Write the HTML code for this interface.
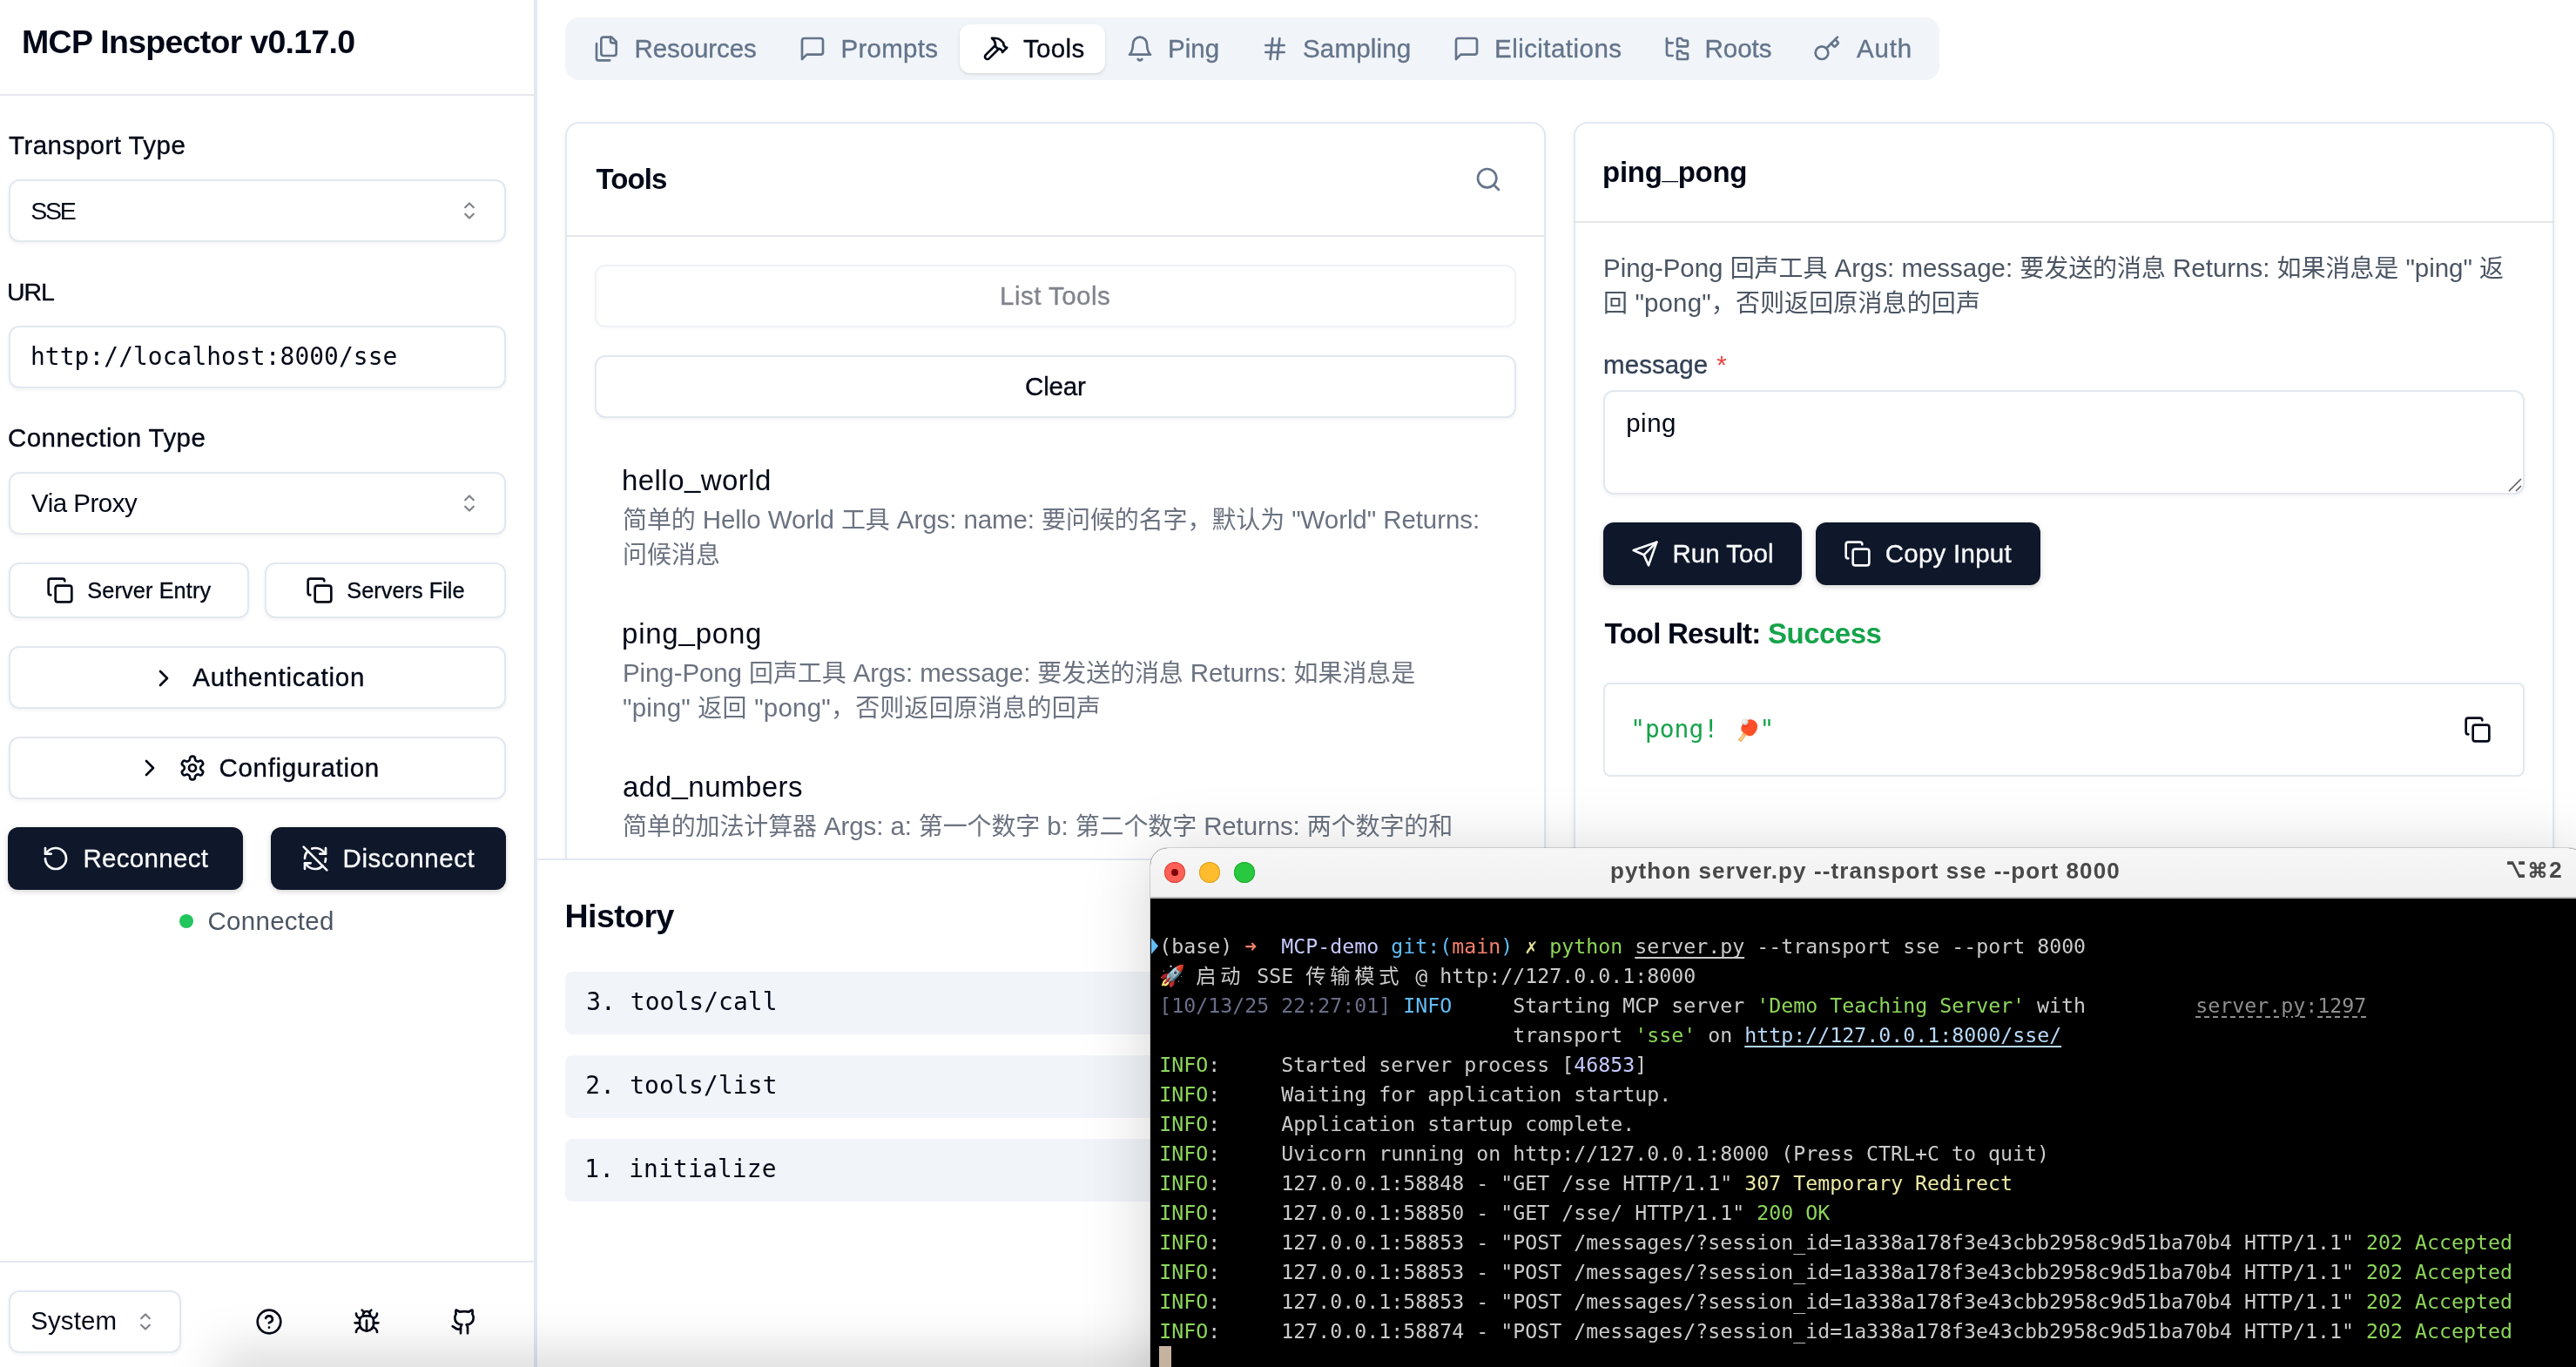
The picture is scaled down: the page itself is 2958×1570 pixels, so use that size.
<!DOCTYPE html>
<html lang="en"><head><meta charset="utf-8"><title>MCP Inspector</title><style>
html,body{margin:0;padding:0}
body{width:2958px;height:1570px;overflow:hidden;background:#fff;position:relative;font-family:'Liberation Sans','Noto Sans CJK SC',sans-serif;color:#020817}
body div,body svg.i,.abs,.t{position:absolute;box-sizing:border-box}
#app{left:0;top:0;width:2958px;height:1570px;overflow:hidden;will-change:transform}
.t{white-space:nowrap;line-height:0;height:0}
.t span{line-height:0}
.s{font-family:'Liberation Sans','Noto Sans CJK SC',sans-serif}
.m{font-family:'DejaVu Sans Mono','Liberation Mono','Noto Sans CJK SC',monospace}
.inp{border:2px solid #e2e8f0;border-radius:12px;background:#fff;box-shadow:0 2px 4px rgba(0,0,0,.05)}
.btn-o{border:2px solid #e2e8f0;border-radius:12px;background:#fff;box-shadow:0 2px 4px rgba(0,0,0,.05)}
.btn-d{background:#0f172a;border-radius:12px;box-shadow:0 2px 6px rgba(0,0,0,.18)}
.card{border:2px solid #e2e8f0;border-radius:16px;background:#fff;box-shadow:0 2px 6px rgba(0,0,0,.06)}
.term{background:#000;border-radius:20px 20px 0 0;overflow:hidden;box-shadow:0 8px 80px rgba(0,0,0,.18),0 0 0 1px rgba(0,0,0,.14)}
</style></head><body>
<div id="app">
<aside class="abs" style="left:0;top:0;width:613px;height:1570px;background:#fff"><span class="t s" style="left:25.00px;top:48.01px;font-size:37.50px;font-weight:700;letter-spacing:-0.711px;">MCP Inspector v0.17.0</span><div style="left:0px;top:108px;width:613px;height:2px;background:#e5e7eb"></div><span class="t s" style="left:10.00px;top:166.78px;font-size:29.50px;letter-spacing:0.470px;-webkit-text-stroke:0.35px #020817;">Transport Type</span><div class="inp" style="left:9.5px;top:206px;width:571px;height:72px;"></div><span class="t s" style="left:35.25px;top:242.12px;font-size:28.50px;letter-spacing:-2.259px;">SSE</span><svg class="i" style="left:523px;top:226px;opacity:0.5" width="32" height="32" viewBox="0 0 15 15" fill="none" stroke="#020817" stroke-width="1" stroke-linecap="round" stroke-linejoin="round"><path d="M5.25 5.75 7.5 3.5l2.25 2.250"/><path d="M5.25 9.250 7.5 11.500l2.250-2.250"/></svg><span class="t s" style="left:8.00px;top:335.12px;font-size:28.50px;letter-spacing:-1.082px;-webkit-text-stroke:0.35px #020817;">URL</span><div class="inp" style="left:9.5px;top:374px;width:571px;height:72px;"></div><span class="t m" style="left:35.00px;top:410.33px;font-size:27.90px;letter-spacing:0.063px;">http://localhost:8000/sse</span><span class="t s" style="left:9.00px;top:502.78px;font-size:29.50px;letter-spacing:0.429px;-webkit-text-stroke:0.35px #020817;">Connection Type</span><div class="inp" style="left:9.5px;top:542px;width:571px;height:72px;"></div><span class="t s" style="left:36.00px;top:577.78px;font-size:29.50px;letter-spacing:-0.495px;">Via Proxy</span><svg class="i" style="left:523px;top:562px;opacity:0.5" width="32" height="32" viewBox="0 0 15 15" fill="none" stroke="#020817" stroke-width="1" stroke-linecap="round" stroke-linejoin="round"><path d="M5.25 5.75 7.5 3.5l2.25 2.250"/><path d="M5.25 9.250 7.5 11.500l2.250-2.250"/></svg><div class="btn-o" style="left:9.5px;top:646px;width:276.5px;height:64px;"></div><svg class="i" style="left:53px;top:661.5px;" width="32" height="32" viewBox="0 0 24 24" fill="none" stroke="#020817" stroke-width="2" stroke-linecap="round" stroke-linejoin="round"><rect width="14" height="14" x="8" y="8" rx="2" ry="2"/><path d="M4 16c-1.1 0-2-.9-2-2V4c0-1.1.9-2 2-2h10c1.1 0 2 .9 2 2"/></svg><span class="t s" style="left:100.25px;top:677.73px;font-size:25.30px;letter-spacing:0.120px;-webkit-text-stroke:0.30px #020817;">Server Entry</span><div class="btn-o" style="left:303.5px;top:646px;width:277px;height:64px;"></div><svg class="i" style="left:350.7px;top:661.5px;" width="32" height="32" viewBox="0 0 24 24" fill="none" stroke="#020817" stroke-width="2" stroke-linecap="round" stroke-linejoin="round"><rect width="14" height="14" x="8" y="8" rx="2" ry="2"/><path d="M4 16c-1.1 0-2-.9-2-2V4c0-1.1.9-2 2-2h10c1.1 0 2 .9 2 2"/></svg><span class="t s" style="left:398.25px;top:677.73px;font-size:25.30px;letter-spacing:0.034px;-webkit-text-stroke:0.30px #020817;">Servers File</span><div class="btn-o" style="left:9.5px;top:742px;width:571px;height:72px;"></div><svg class="i" style="left:172px;top:762.5px;" width="32" height="32" viewBox="0 0 24 24" fill="none" stroke="#020817" stroke-width="2" stroke-linecap="round" stroke-linejoin="round"><path d="m9 18 6-6-6-6"/></svg><span class="t s" style="left:221.25px;top:777.78px;font-size:29.50px;letter-spacing:0.784px;-webkit-text-stroke:0.35px #020817;">Authentication</span><div class="btn-o" style="left:9.5px;top:846px;width:571px;height:72px;"></div><svg class="i" style="left:155.6px;top:866px;" width="32" height="32" viewBox="0 0 24 24" fill="none" stroke="#020817" stroke-width="2" stroke-linecap="round" stroke-linejoin="round"><path d="m9 18 6-6-6-6"/></svg><svg class="i" style="left:205px;top:866px;" width="32" height="32" viewBox="0 0 24 24" fill="none" stroke="#020817" stroke-width="2" stroke-linecap="round" stroke-linejoin="round"><path d="M12.22 2h-.44a2 2 0 0 0-2 2v.18a2 2 0 0 1-1 1.73l-.43.25a2 2 0 0 1-2 0l-.15-.08a2 2 0 0 0-2.73.73l-.22.38a2 2 0 0 0 .73 2.73l.15.1a2 2 0 0 1 1 1.72v.51a2 2 0 0 1-1 1.74l-.15.09a2 2 0 0 0-.73 2.73l.22.38a2 2 0 0 0 2.73.73l.15-.08a2 2 0 0 1 2 0l.43.25a2 2 0 0 1 1 1.73V20a2 2 0 0 0 2 2h.44a2 2 0 0 0 2-2v-.18a2 2 0 0 1 1-1.73l.43-.25a2 2 0 0 1 2 0l.15.08a2 2 0 0 0 2.73-.73l.22-.39a2 2 0 0 0-.73-2.73l-.15-.08a2 2 0 0 1-1-1.74v-.5a2 2 0 0 1 1-1.74l.15-.09a2 2 0 0 0 .73-2.73l-.22-.38a2 2 0 0 0-2.73-.73l-.15.08a2 2 0 0 1-2 0l-.43-.25a2 2 0 0 1-1-1.73V4a2 2 0 0 0-2-2z"/><circle cx="12" cy="12" r="3"/></svg><span class="t s" style="left:251.50px;top:881.78px;font-size:29.50px;letter-spacing:0.682px;-webkit-text-stroke:0.35px #020817;">Configuration</span><div class="btn-d" style="left:9px;top:950px;width:270px;height:72px;"></div><svg class="i" style="left:47.5px;top:970px;" width="32" height="32" viewBox="0 0 24 24" fill="none" stroke="#f8fafc" stroke-width="2" stroke-linecap="round" stroke-linejoin="round"><path d="M3 12a9 9 0 1 0 9-9 9.75 9.75 0 0 0-6.74 2.74L3 8"/><path d="M3 3v5h5"/></svg><span class="t s" style="left:95.50px;top:985.78px;font-size:29.50px;color:#f8fafc;letter-spacing:0.302px;-webkit-text-stroke:0.30px #f8fafc;">Reconnect</span><div class="btn-d" style="left:311px;top:950px;width:270px;height:72px;"></div><svg class="i" style="left:346px;top:970px;" width="32" height="32" viewBox="0 0 24 24" fill="none" stroke="#f8fafc" stroke-width="2" stroke-linecap="round" stroke-linejoin="round"><path d="M21 8L18.74 5.74A9.75 9.75 0 0 0 12 3C11 3 10.03 3.16 9.13 3.47"/><path d="M8 16H3v5"/><path d="M3 12C3 9.51 4 7.26 5.64 5.64"/><path d="m3 16 2.26 2.26A9.75 9.75 0 0 0 12 21c2.49 0 4.74-1 6.36-2.64"/><path d="M21 12c0 1-.16 1.97-.47 2.87"/><path d="M21 3v5h-5"/><path d="M22 22 2 2"/></svg><span class="t s" style="left:393.50px;top:985.78px;font-size:29.50px;color:#f8fafc;letter-spacing:0.585px;-webkit-text-stroke:0.30px #f8fafc;">Disconnect</span><div style="left:206px;top:1050px;width:16px;height:16px;background:#22c55e;border-radius:50%"></div><span class="t s" style="left:238.50px;top:1057.78px;font-size:29.50px;color:#4b5563;letter-spacing:0.277px;">Connected</span><div style="left:0px;top:1448px;width:613px;height:2px;background:#e2e8f0"></div><div class="inp" style="left:9.5px;top:1482px;width:198.75px;height:72px;"></div><span class="t s" style="left:35.25px;top:1517.28px;font-size:29.50px;letter-spacing:0.094px;">System</span><svg class="i" style="left:151px;top:1502px;opacity:0.5" width="32" height="32" viewBox="0 0 15 15" fill="none" stroke="#020817" stroke-width="1" stroke-linecap="round" stroke-linejoin="round"><path d="M5.25 5.75 7.5 3.5l2.25 2.250"/><path d="M5.25 9.250 7.5 11.500l2.250-2.250"/></svg><svg class="i" style="left:293px;top:1502px;" width="32" height="32" viewBox="0 0 24 24" fill="none" stroke="#020817" stroke-width="2" stroke-linecap="round" stroke-linejoin="round"><circle cx="12" cy="12" r="10"/><path d="M9.09 9a3 3 0 0 1 5.83 1c0 2-3 3-3 3"/><path d="M12 17h.01"/></svg><svg class="i" style="left:405px;top:1502px;" width="32" height="32" viewBox="0 0 24 24" fill="none" stroke="#020817" stroke-width="2" stroke-linecap="round" stroke-linejoin="round"><path d="m8 2 1.88 1.88"/><path d="M14.12 3.88 16 2"/><path d="M9 7.13v-1a3.003 3.003 0 1 1 6 0v1"/><path d="M12 20c-3.3 0-6-2.7-6-6v-3a4 4 0 0 1 4-4h4a4 4 0 0 1 4 4v3c0 3.3-2.7 6-6 6"/><path d="M12 20v-9"/><path d="M6.53 9C4.6 8.8 3 7.1 3 5"/><path d="M6 13H2"/><path d="M3 21c0-2.1 1.7-3.9 3.8-4"/><path d="M20.97 5c0 2.1-1.6 3.8-3.5 4"/><path d="M22 13h-4"/><path d="M17.2 17c2.1.1 3.8 1.9 3.8 4"/></svg><svg class="i" style="left:517.4px;top:1502px;" width="32" height="32" viewBox="0 0 24 24" fill="none" stroke="#020817" stroke-width="2" stroke-linecap="round" stroke-linejoin="round"><path d="M15 22v-4a4.8 4.8 0 0 0-1-3.5c3 0 6-2 6-5.5.08-1.25-.27-2.48-1-3.5.28-1.15.28-2.35 0-3.5 0 0-1 0-3 1.5-2.64-.5-5.36-.5-8 0C6 2 5 2 5 2c-.3 1.15-.3 2.35 0 3.5A5.403 5.403 0 0 0 4 9c0 3.5 3 5.500 6 5.500-.39.49-.68 1.05-.85 1.650-.17.6-.22 1.23-.15 1.850v4"/><path d="M9 18c-4.51 2-5-2-7-2"/></svg></aside><div style="left:613px;top:0px;width:4px;height:1570px;background:#e2e8f0"></div><main class="abs" style="left:617px;top:0;width:2341px;height:1570px;background:#fff"></main><div style="left:649px;top:20px;width:1578px;height:72px;background:#f1f5f9;border-radius:16px"></div><div style="left:1102px;top:28px;width:167px;height:56px;background:#fff;border-radius:12px;box-shadow:0 2px 4px rgba(0,0,0,.08),0 1px 2px rgba(0,0,0,.06)"></div><svg class="i" style="left:681px;top:40px;" width="32" height="32" viewBox="0 0 24 24" fill="none" stroke="#64748b" stroke-width="2" stroke-linecap="round" stroke-linejoin="round"><path d="M20 7h-3a2 2 0 0 1-2-2V2"/><path d="M9 18a2 2 0 0 1-2-2V4a2 2 0 0 1 2-2h7l4 4v10a2 2 0 0 1-2 2Z"/><path d="M3 7.6v12.8A1.6 1.6 0 0 0 4.6 22h9.8"/></svg><span class="t s" style="left:728.50px;top:55.78px;font-size:29.50px;color:#64748b;letter-spacing:-0.094px;-webkit-text-stroke:0.35px #64748b;">Resources</span><svg class="i" style="left:917px;top:40px;" width="32" height="32" viewBox="0 0 24 24" fill="none" stroke="#64748b" stroke-width="2" stroke-linecap="round" stroke-linejoin="round"><path d="M21 15a2 2 0 0 1-2 2H7l-4 4V5a2 2 0 0 1 2-2h14a2 2 0 0 1 2 2z"/></svg><span class="t s" style="left:965.50px;top:55.78px;font-size:29.50px;color:#64748b;letter-spacing:0.278px;-webkit-text-stroke:0.35px #64748b;">Prompts</span><svg class="i" style="left:1126.5px;top:40px;" width="32" height="32" viewBox="0 0 24 24" fill="none" stroke="#020817" stroke-width="2" stroke-linecap="round" stroke-linejoin="round"><path d="m15 12-8.373 8.373a1 1 0 1 1-3-3L12 9"/><path d="m18 15 4-4"/><path d="m21.5 11.5-1.914-1.914A2 2 0 0 1 19 8.172V7l-2.26-2.26a6 6 0 0 0-4.202-1.756L9 2.96l.92.82A6.18 6.18 0 0 1 12 8.4V10l2 2h1.172a2 2 0 0 1 1.414.586L18.5 14.5"/></svg><span class="t s" style="left:1175.00px;top:55.78px;font-size:29.50px;letter-spacing:0.346px;-webkit-text-stroke:0.35px #020817;">Tools</span><svg class="i" style="left:1293px;top:40px;" width="32" height="32" viewBox="0 0 24 24" fill="none" stroke="#64748b" stroke-width="2" stroke-linecap="round" stroke-linejoin="round"><path d="M6 8a6 6 0 0 1 12 0c0 7 3 9 3 9H3s3-2 3-9"/><path d="M10.3 21a1.94 1.94 0 0 0 3.4 0"/></svg><span class="t s" style="left:1341.00px;top:55.78px;font-size:29.50px;color:#64748b;letter-spacing:0.038px;-webkit-text-stroke:0.35px #64748b;">Ping</span><svg class="i" style="left:1448px;top:40px;" width="32" height="32" viewBox="0 0 24 24" fill="none" stroke="#64748b" stroke-width="2" stroke-linecap="round" stroke-linejoin="round"><line x1="4" x2="20" y1="9" y2="9"/><line x1="4" x2="20" y1="15" y2="15"/><line x1="10" x2="8" y1="3" y2="21"/><line x1="16" x2="14" y1="3" y2="21"/></svg><span class="t s" style="left:1496.00px;top:55.78px;font-size:29.50px;color:#64748b;letter-spacing:0.168px;-webkit-text-stroke:0.35px #64748b;">Sampling</span><svg class="i" style="left:1668px;top:40px;" width="32" height="32" viewBox="0 0 24 24" fill="none" stroke="#64748b" stroke-width="2" stroke-linecap="round" stroke-linejoin="round"><path d="M21 15a2 2 0 0 1-2 2H7l-4 4V5a2 2 0 0 1 2-2h14a2 2 0 0 1 2 2z"/></svg><span class="t s" style="left:1716.00px;top:55.78px;font-size:29.50px;color:#64748b;letter-spacing:0.454px;-webkit-text-stroke:0.35px #64748b;">Elicitations</span><svg class="i" style="left:1910px;top:40px;" width="32" height="32" viewBox="0 0 24 24" fill="none" stroke="#64748b" stroke-width="2" stroke-linecap="round" stroke-linejoin="round"><path d="M20 10a1 1 0 0 0 1-1V6a1 1 0 0 0-1-1h-2.5a1 1 0 0 1-.8-.4l-.9-1.2A1 1 0 0 0 15 3h-2a1 1 0 0 0-1 1v5a1 1 0 0 0 1 1Z"/><path d="M20 21a1 1 0 0 0 1-1v-3a1 1 0 0 0-1-1h-2.9a1 1 0 0 1-.88-.55l-.42-.85a1 1 0 0 0-.92-.6H13a1 1 0 0 0-1 1v5a1 1 0 0 0 1 1Z"/><path d="M3 5a2 2 0 0 0 2 2h3"/><path d="M3 3v13a2 2 0 0 0 2 2h3"/></svg><span class="t s" style="left:1957.50px;top:55.78px;font-size:29.50px;color:#64748b;letter-spacing:-0.016px;-webkit-text-stroke:0.35px #64748b;">Roots</span><svg class="i" style="left:2082.4px;top:40px;" width="32" height="32" viewBox="0 0 24 24" fill="none" stroke="#64748b" stroke-width="2" stroke-linecap="round" stroke-linejoin="round"><path d="m15.5 7.5 2.3 2.3a1 1 0 0 0 1.4 0l2.1-2.1a1 1 0 0 0 0-1.4L19 4"/><path d="m21 2-9.6 9.6"/><circle cx="7.5" cy="15.5" r="5.5"/></svg><span class="t s" style="left:2132.00px;top:55.78px;font-size:29.50px;color:#64748b;letter-spacing:0.824px;-webkit-text-stroke:0.35px #64748b;">Auth</span><div class="card" style="left:649px;top:140px;width:1125.5px;height:900px;"></div><span class="t s" style="left:684.50px;top:205.57px;font-size:33.00px;font-weight:700;letter-spacing:-0.923px;">Tools</span><svg class="i" style="left:1693px;top:190px;" width="32" height="32" viewBox="0 0 24 24" fill="none" stroke="#64748b" stroke-width="2" stroke-linecap="round" stroke-linejoin="round"><circle cx="11" cy="11" r="8"/><path d="m21 21-4.3-4.3"/></svg><div style="left:651px;top:270px;width:1121.5px;height:2px;background:#e5e7eb"></div><div class="btn-o" style="left:683px;top:304px;width:1057.5px;height:72px;opacity:.55"></div><span class="t s" style="left:1148.00px;top:339.78px;font-size:29.50px;color:#80848c;letter-spacing:0.476px;-webkit-text-stroke:0.35px #80848c;">List Tools</span><div class="btn-o" style="left:683px;top:408px;width:1057.5px;height:72px;"></div><span class="t s" style="left:1177.00px;top:443.78px;font-size:29.50px;letter-spacing:-0.168px;-webkit-text-stroke:0.35px #020817;">Clear</span><span class="t s" style="left:714.00px;top:551.57px;font-size:33.00px;letter-spacing:0.442px;">hello<span style="position:relative;top:-.11em">_</span>world</span><span class="t s" style="left:715.00px;top:596.78px;font-size:29.50px;color:#6b7280;letter-spacing:-0.084px;"><span style="font-size:27.99px">简单的</span> Hello World <span style="font-size:27.99px">工具</span> Args: name: <span style="font-size:27.99px">要问候的名字，默认为</span> "World" Returns:</span><span class="t s" style="left:715.00px;top:636.78px;font-size:29.50px;color:#6b7280;letter-spacing:0.016px;"><span style="font-size:27.99px">问候消息</span></span><span class="t s" style="left:714.00px;top:727.57px;font-size:33.00px;letter-spacing:0.775px;">ping<span style="position:relative;top:-.11em">_</span>pong</span><span class="t s" style="left:715.00px;top:772.78px;font-size:29.50px;color:#6b7280;letter-spacing:-0.097px;">Ping-Pong <span style="font-size:27.99px">回声工具</span> Args: message: <span style="font-size:27.99px">要发送的消息</span> Returns: <span style="font-size:27.99px">如果消息是</span></span><span class="t s" style="left:715.00px;top:812.78px;font-size:29.50px;color:#6b7280;letter-spacing:0.204px;">"ping" <span style="font-size:27.99px">返回</span> "pong"<span style="font-size:27.99px">，否则返回原消息的回声</span></span><span class="t s" style="left:715.00px;top:903.57px;font-size:33.00px;letter-spacing:0.470px;">add<span style="position:relative;top:-.11em">_</span>numbers</span><span class="t s" style="left:715.00px;top:948.78px;font-size:29.50px;color:#6b7280;letter-spacing:-0.116px;"><span style="font-size:27.99px">简单的加法计算器</span> Args: a: <span style="font-size:27.99px">第一个数字</span> b: <span style="font-size:27.99px">第二个数字</span> Returns: <span style="font-size:27.99px">两个数字的和</span></span><div class="card" style="left:1807.25px;top:140px;width:1125.75px;height:900px;"></div><span class="t s" style="left:1840.00px;top:198.07px;font-size:33.00px;font-weight:700;letter-spacing:-0.277px;">ping<span style="position:relative;top:-.11em">_</span>pong</span><div style="left:1809.25px;top:254px;width:1121.75px;height:2px;background:#e5e7eb"></div><span class="t s" style="left:1841.00px;top:307.78px;font-size:29.50px;color:#4b5563;letter-spacing:-0.034px;">Ping-Pong <span style="font-size:27.99px">回声工具</span> Args: message: <span style="font-size:27.99px">要发送的消息</span> Returns: <span style="font-size:27.99px">如果消息是</span> "ping" <span style="font-size:27.99px">返</span></span><span class="t s" style="left:1841.00px;top:347.78px;font-size:29.50px;color:#4b5563;letter-spacing:0.127px;"><span style="font-size:27.99px">回</span> "pong"<span style="font-size:27.99px">，否则返回原消息的回声</span></span><span class="t s" style="left:1841.00px;top:419.28px;font-size:29.50px;color:#334155;letter-spacing:0.076px;-webkit-text-stroke:0.35px #334155;">message</span><span class="t s" style="left:1971.25px;top:419.28px;font-size:29.50px;color:#ef4444;">*</span><div class="inp" style="left:1841.25px;top:448px;width:1057.75px;height:120px;"></div><span class="t s" style="left:1867.25px;top:485.78px;font-size:29.50px;letter-spacing:0.461px;">ping</span><svg class="i" style="left:2878px;top:548px" width="20" height="20" viewBox="0 0 20 20" stroke="#5f5f5f" stroke-width="1.600" fill="none"><path d="M17 2 3 16M17 10l-6 6"/></svg><div class="btn-d" style="left:1841px;top:600px;width:228px;height:72px;"></div><svg class="i" style="left:1873.2px;top:620px;" width="32" height="32" viewBox="0 0 24 24" fill="none" stroke="#f8fafc" stroke-width="2" stroke-linecap="round" stroke-linejoin="round"><path d="m22 2-7 20-4-9-9-4Z"/><path d="M22 2 11 13"/></svg><span class="t s" style="left:1920.50px;top:635.78px;font-size:29.50px;color:#f8fafc;letter-spacing:0.018px;-webkit-text-stroke:0.35px #f8fafc;">Run Tool</span><div class="btn-d" style="left:2085px;top:600px;width:258px;height:72px;"></div><svg class="i" style="left:2116.7px;top:620px;" width="32" height="32" viewBox="0 0 24 24" fill="none" stroke="#f8fafc" stroke-width="2" stroke-linecap="round" stroke-linejoin="round"><rect width="14" height="14" x="8" y="8" rx="2" ry="2"/><path d="M4 16c-1.1 0-2-.9-2-2V4c0-1.1.9-2 2-2h10c1.1 0 2 .9 2 2"/></svg><span class="t s" style="left:2164.75px;top:635.78px;font-size:29.50px;color:#f8fafc;letter-spacing:0.252px;-webkit-text-stroke:0.35px #f8fafc;">Copy Input</span><span class="t s" style="left:1842.50px;top:727.57px;font-size:33.00px;font-weight:700;letter-spacing:-0.769px;">Tool Result:</span><span class="t s" style="left:2030.00px;top:727.57px;font-size:33.00px;color:#16a34a;font-weight:700;letter-spacing:-0.513px;">Success</span><div style="left:1841.25px;top:784px;width:1057.75px;height:108px;border:2px solid #e2e8f0;border-radius:8px;background:#fff"></div><span class="t m" style="left:1872.25px;top:837.83px;font-size:27.90px;color:#16a34a;">"pong! </span><span class="t m" style="left:1991.50px;top:839.18px;font-size:24.00px;color:#16a34a;">🏓</span><span class="t m" style="left:2020.50px;top:837.83px;font-size:27.90px;color:#16a34a;">"</span><svg class="i" style="left:2829px;top:822px;" width="32" height="32" viewBox="0 0 24 24" fill="none" stroke="#020817" stroke-width="2" stroke-linecap="round" stroke-linejoin="round"><rect width="14" height="14" x="8" y="8" rx="2" ry="2"/><path d="M4 16c-1.1 0-2-.9-2-2V4c0-1.1.9-2 2-2h10c1.1 0 2 .9 2 2"/></svg><div style="left:617px;top:986px;width:2341px;height:584px;background:#fff;border-top:2px solid #e2e8f0"></div><span class="t s" style="left:648.50px;top:1052.01px;font-size:37.50px;font-weight:700;letter-spacing:-0.557px;">History</span><div style="left:649px;top:1116px;width:1100px;height:72px;background:#f1f5f9;border-radius:8px"></div><span class="t m" style="left:673.25px;top:1151.33px;font-size:27.90px;letter-spacing:0.083px;">3. tools/call</span><div style="left:649px;top:1212px;width:1100px;height:72px;background:#f1f5f9;border-radius:8px"></div><span class="t m" style="left:672.25px;top:1247.33px;font-size:27.90px;letter-spacing:0.167px;">2. tools/list</span><div style="left:649px;top:1308px;width:1100px;height:72px;background:#f1f5f9;border-radius:8px"></div><span class="t m" style="left:671.25px;top:1343.33px;font-size:27.90px;letter-spacing:0.167px;">1. initialize</span><div style="left:250px;top:1548px;width:1300px;height:120px;background:rgba(0,0,0,.13);filter:blur(26px);pointer-events:none"></div><section class="abs term" style="left:1321px;top:974px;width:1648px;height:700px"><div class="abs" style="left:0;top:0;width:1648px;height:58px;background:linear-gradient(#f6f6f6,#f1f1f1);border-bottom:2px solid #b9b9b9"></div><div style="left:16px;top:16px;width:24px;height:24px;background:#fe5f57;border-radius:50%;box-shadow:inset 0 0 0 1px #e0443e"></div><div style="left:56px;top:16px;width:24px;height:24px;background:#febc2e;border-radius:50%;box-shadow:inset 0 0 0 1px #dea123"></div><div style="left:96px;top:16px;width:24px;height:24px;background:#28c840;border-radius:50%;box-shadow:inset 0 0 0 1px #1aab29"></div><div style="left:24px;top:24px;width:8px;height:8px;background:#7e0508;border-radius:50%"></div></section><span class="t s" style="left:1849.00px;top:999.99px;font-size:26.00px;color:#484848;font-weight:700;letter-spacing:1.098px;">python server.py --transport sse --port 8000</span><span class="t" style="left:2876.50px;top:998.64px;font-size:27.00px;color:#484848;font-family:'DejaVu Sans',sans-serif;font-weight:700;transform:scale(.74,1.2);transform-origin:2px 0;margin-top:-2px;">⌥</span><span class="t" style="left:2902.25px;top:999.86px;font-size:23.50px;color:#484848;font-family:'DejaVu Sans',sans-serif;-webkit-text-stroke:0.70px #484848;">⌘</span><span class="t s" style="left:2927.25px;top:998.99px;font-size:26.00px;color:#484848;font-weight:700;">2</span><svg class="i" style="left:1322px;top:1077px" width="8" height="19" viewBox="0 0 8 19"><path d="M0 0 8 9.500 0 19Z" fill="#62bcf6"/></svg><span class="t m" style="left:1331.25px;top:1087.44px;font-size:23.25px;color:#cbcbcb;white-space:pre;"><span style="color:#cbcbcb">(base) </span><span style="color:#f4806c">➜</span>  <span style="color:#c5c8fc">MCP-demo </span><span style="color:#62bcf6">git:(</span><span style="color:#f4806c">main</span><span style="color:#62bcf6">) </span><span style="color:#e5e29a">✗</span> <span style="color:#8cd65a">python </span><span style="color:#cbcbcb;text-decoration:underline;text-underline-offset:4px;text-decoration-thickness:1.5px">server.py</span> --transport sse --port 8000</span><span class="t m" style="left:1331.25px;top:1121.44px;font-size:23.25px;color:#cbcbcb;white-space:pre;"><span style="display:inline-block;width:28px;font-size:24px">🚀</span></span><span class="t m" style="left:1373.25px;top:1121.44px;font-size:23.25px;color:#cbcbcb;white-space:pre;"><span style="letter-spacing:4.75px">启动</span></span><span class="t m" style="left:1443.25px;top:1121.44px;font-size:23.25px;color:#cbcbcb;white-space:pre;">SSE</span><span class="t m" style="left:1499.25px;top:1121.44px;font-size:23.25px;color:#cbcbcb;white-space:pre;"><span style="letter-spacing:4.75px">传输模式</span></span><span class="t m" style="left:1625.25px;top:1121.44px;font-size:23.25px;color:#cbcbcb;white-space:pre;">@ http://127.0.0.1:8000</span><span class="t m" style="left:1331.25px;top:1155.44px;font-size:23.25px;color:#cbcbcb;white-space:pre;"><span style="color:#6a6e89">[10/13/25 22:27:01] </span><span style="color:#62bcf6">INFO</span>     Starting MCP server <span style="color:#8cd65a">'Demo Teaching Server'</span> with</span><span class="t m" style="left:2521.25px;top:1155.44px;font-size:23.25px;color:#cbcbcb;white-space:pre;"><span style="color:#8e8e8e;text-decoration:underline dashed;text-underline-offset:4px;text-decoration-thickness:1.5px">server.py</span><span style="color:#8e8e8e">:</span><span style="color:#8e8e8e;text-decoration:underline dashed;text-underline-offset:4px;text-decoration-thickness:1.5px">1297</span></span><span class="t m" style="left:1737.25px;top:1189.44px;font-size:23.25px;color:#cbcbcb;white-space:pre;">transport <span style="color:#8cd65a">'sse'</span> on <span style="color:#b8d9f8;text-decoration:underline;text-underline-offset:4px;text-decoration-thickness:1.5px">http://127.0.0.1:8000/sse/</span></span><span class="t m" style="left:1331.25px;top:1223.44px;font-size:23.25px;color:#cbcbcb;white-space:pre;"><span style="color:#8cd65a">INFO</span>:     Started server process [<span style="color:#c5c8fc">46853</span>]</span><span class="t m" style="left:1331.25px;top:1257.44px;font-size:23.25px;color:#cbcbcb;white-space:pre;"><span style="color:#8cd65a">INFO</span>:     Waiting for application startup.</span><span class="t m" style="left:1331.25px;top:1291.44px;font-size:23.25px;color:#cbcbcb;white-space:pre;"><span style="color:#8cd65a">INFO</span>:     Application startup complete.</span><span class="t m" style="left:1331.25px;top:1325.44px;font-size:23.25px;color:#cbcbcb;white-space:pre;"><span style="color:#8cd65a">INFO</span>:     Uvicorn running on http://127.0.0.1:8000 (Press CTRL+C to quit)</span><span class="t m" style="left:1331.25px;top:1359.44px;font-size:23.25px;color:#cbcbcb;white-space:pre;"><span style="color:#8cd65a">INFO</span>:     127.0.0.1:58848 - "GET /sse HTTP/1.1" <span style="color:#ece9a5">307 Temporary Redirect</span></span><span class="t m" style="left:1331.25px;top:1393.44px;font-size:23.25px;color:#cbcbcb;white-space:pre;"><span style="color:#8cd65a">INFO</span>:     127.0.0.1:58850 - "GET /sse/ HTTP/1.1" <span style="color:#8cd65a">200 OK</span></span><span class="t m" style="left:1331.25px;top:1427.44px;font-size:23.25px;color:#cbcbcb;white-space:pre;"><span style="color:#8cd65a">INFO</span>:     127.0.0.1:58853 - "POST /messages/?session_id=1a338a178f3e43cbb2958c9d51ba70b4 HTTP/1.1" <span style="color:#8cd65a">202 Accepted</span></span><span class="t m" style="left:1331.25px;top:1461.44px;font-size:23.25px;color:#cbcbcb;white-space:pre;"><span style="color:#8cd65a">INFO</span>:     127.0.0.1:58853 - "POST /messages/?session_id=1a338a178f3e43cbb2958c9d51ba70b4 HTTP/1.1" <span style="color:#8cd65a">202 Accepted</span></span><span class="t m" style="left:1331.25px;top:1495.44px;font-size:23.25px;color:#cbcbcb;white-space:pre;"><span style="color:#8cd65a">INFO</span>:     127.0.0.1:58853 - "POST /messages/?session_id=1a338a178f3e43cbb2958c9d51ba70b4 HTTP/1.1" <span style="color:#8cd65a">202 Accepted</span></span><span class="t m" style="left:1331.25px;top:1529.44px;font-size:23.25px;color:#cbcbcb;white-space:pre;"><span style="color:#8cd65a">INFO</span>:     127.0.0.1:58874 - "POST /messages/?session_id=1a338a178f3e43cbb2958c9d51ba70b4 HTTP/1.1" <span style="color:#8cd65a">202 Accepted</span></span><div style="left:1331.25px;top:1546.25px;width:13.75px;height:24px;background:#c6b39e"></div>
</div>
</body></html>
